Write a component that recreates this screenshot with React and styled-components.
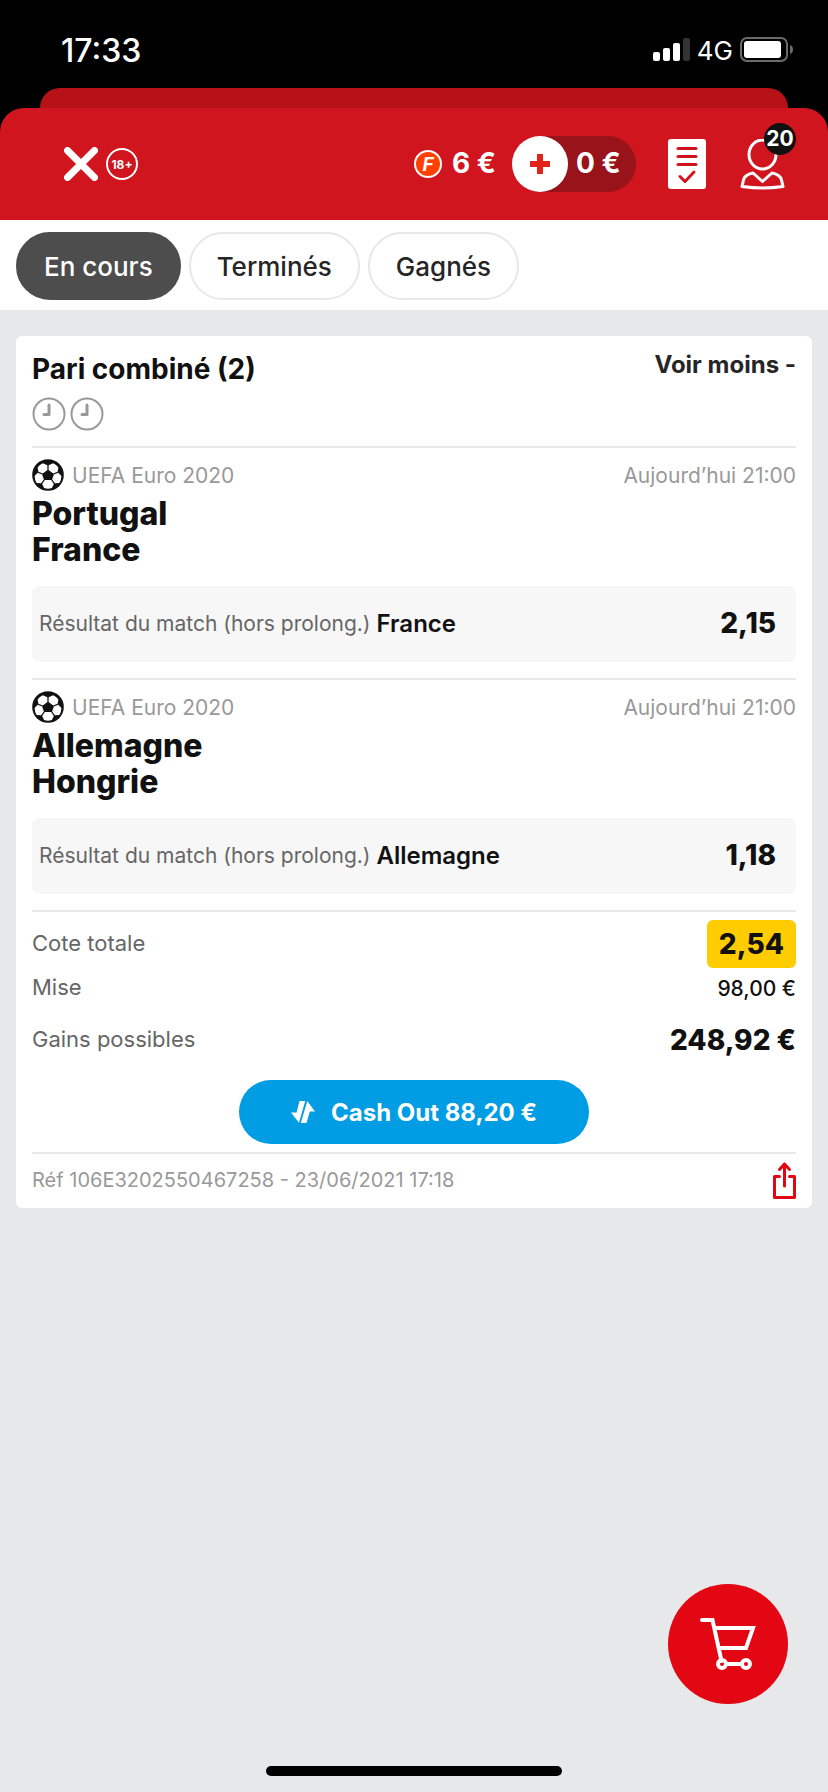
import styled, { createGlobalStyle } from 'styled-components';
import React, { useState } from 'react';

const tabs = ['En cours', 'Terminés', 'Gagnés']

const bets = [
    { id: 1, league: 'UEFA Euro 2020', date: 'Aujourd’hui 21:00', home: 'Portugal', away: 'France', market: 'Résultat du match (hors prolong.)', pick: 'France', odds: '2,15' },
    { id: 2, league: 'UEFA Euro 2020', date: 'Aujourd’hui 21:00', home: 'Allemagne', away: 'Hongrie', market: 'Résultat du match (hors prolong.)', pick: 'Allemagne', odds: '1,18' },
]

const SignalIcon = () => (
    <svg width="37" height="24" viewBox="0 0 37 24" fill="#fff" aria-hidden="true">
        <rect x="0" y="14" width="7" height="9" rx="2" />
        <rect x="10" y="10" width="7" height="13" rx="2" />
        <rect x="20" y="5" width="7" height="18" rx="2" />
        <rect x="30" y="0" width="7" height="23" rx="2" fill="#333" />
    </svg>
)

const BatteryIcon = () => (
    <svg width="54" height="26" viewBox="0 0 54 26" aria-hidden="true">
        <rect x="1" y="1" width="46" height="23" rx="6" fill="none" stroke="#6b6b6b" strokeWidth="2" />
        <rect x="4" y="4" width="37" height="17" rx="3" fill="#fff" />
        <path d="M50 8c4 1.500 4 7.500 0 9z" fill="#6b6b6b" />
    </svg>
)

const CrossIcon = () => (
    <svg width="34" height="34" viewBox="0 0 34 34" aria-hidden="true">
        <path d="M3.500 3.500l27 27M30.500 3.500l-27 27" stroke="#fff" strokeWidth="7" strokeLinecap="round" />
    </svg>
)

const SlipIcon = () => (
    <svg width="38" height="50" viewBox="0 0 38 50" fill="none" aria-hidden="true">
        <rect width="38" height="50" rx="3" fill="#fff" />
        <path d="M10 9.500h18M10 17.500h18M10 25.500h18" stroke="#d0151e" strokeWidth="3" strokeLinecap="round" />
        <path d="M12 37.500l5 5 9-9.500" stroke="#d0151e" strokeWidth="3" strokeLinecap="round" strokeLinejoin="round" />
    </svg>
)

const UserIcon = () => (
    <svg width="46" height="51" viewBox="0 0 46 51" fill="none" stroke="#fff" strokeWidth="3" strokeLinejoin="round" aria-hidden="true">
        <ellipse cx="22.500" cy="15.500" rx="13.500" ry="14.500" />
        <path d="M13 34C7.500 35 4.500 36.500 3.500 41L2 47.500q20.500 3 41 0L41.500 41c-1-4.500-4-6-9.500-7l-9.500 8.500z" />
    </svg>
)

const ClockIcon = () => (
    <svg width="34" height="34" viewBox="0 0 34 34" fill="none" stroke="#999" aria-hidden="true">
        <circle cx="17" cy="17" r="15.500" strokeWidth="2" />
        <path d="M17 8v9.500h-5" strokeWidth="3" strokeLinecap="round" strokeLinejoin="round" />
    </svg>
)

const BallIcon = () => (
    <svg width="32" height="32" viewBox="0 0 32 32" aria-hidden="true">
        <circle cx="16" cy="16" r="15.800" fill="#111" />
        <g fill="#fff">
            <path d="M15.400 6.200v4.800l-4.600 3.400-4.400-1.600-.8-4.300q2-2.900 5.300-4.300z" />
            <path d="M16.600 6.200v4.800l4.600 3.400 4.400-1.600.8-4.300q-2-2.900-5.300-4.300z" />
            <path d="M5.700 13.800l4.500 1.700 1.700 4.900-2.800 3.800-4.500-.2Q2.600 20.800 2.600 17z" />
            <path d="M26.300 13.800l-4.500 1.700-1.700 4.900 2.800 3.800 4.500-.2q2-3.200 2-7z" />
            <path d="M12.900 21h6.200l2.700 3.900-1.900 4.100q-3.900 1.400-7.800 0l-1.900-4.100z" />
        </g>
    </svg>
)

const CashOutIcon = () => (
    <svg width="24" height="22" viewBox="0 0 24 22" fill="#fff" aria-hidden="true">
        <path d="M8.500 0h5.700L8 21.800 0 11.500h5.600z" />
        <path d="M16.300 0L24 10.500h-5.200L15.500 22H9.800z" />
    </svg>
)

const ShareIcon = () => (
    <svg width="23" height="38" viewBox="0 0 23 38" fill="none" stroke="#e30613" strokeWidth="3" strokeLinecap="round" strokeLinejoin="round" aria-hidden="true">
        <path d="M6.500 15.500h-5v21h20v-21h-5" />
        <path d="M11.500 25V3M6.500 8.500L11.500 3l5 5.500" />
    </svg>
)

const CartIcon = () => (
    <svg width="56" height="52" viewBox="0 0 56 52" fill="none" stroke="#fff" strokeWidth="4" strokeLinecap="round" aria-hidden="true">
        <path d="M2 2h10.500l9 41" />
        <path d="M16 10h37l-7 20H20" />
        <path d="M26 46h16" />
        <circle cx="22" cy="46" r="4" />
        <circle cx="46" cy="46" r="4" />
    </svg>
)

export default function App() {
    const [active, setActive] = useState('En cours')
    const [open, setOpen] = useState(true)
    return (
        <>
            <GlobalStyle />
            <Page>
                <StatusBar>
                    <Time>17:33</Time>
                    <StatusIcons>
                        <SignalIcon />
                        <span>4G</span>
                        <BatteryIcon />
                    </StatusIcons>
                </StatusBar>
                <BackSheet />
                <Header>
                    <IconButton aria-label="Fermer"><CrossIcon /></IconButton>
                    <AgeMark>18+</AgeMark>
                    <Spacer />
                    <Freebet>
                        <Coin>F</Coin>
                        <Amount>6 €</Amount>
                    </Freebet>
                    <Balance aria-label="Déposer, solde 0 €">
                        <Plus />
                        <Amount>0 €</Amount>
                    </Balance>
                    <IconButton aria-label="Mes paris"><SlipIcon /></IconButton>
                    <Account aria-label="Mon compte">
                        <UserIcon />
                        <Badge>20</Badge>
                    </Account>
                </Header>
                <Tabs>
                    {tabs.map((tab) => (
                        <Tab key={tab} $active={tab === active} onClick={() => setActive(tab)}>{tab}</Tab>
                    ))}
                </Tabs>
                <Main>
                    <Card>
                        <CardHead>
                            <div>
                                <Title>Pari combiné (2)</Title>
                                <Clocks>
                                    {bets.map((bet) => <ClockIcon key={bet.id} />)}
                                </Clocks>
                            </div>
                            <Toggle onClick={() => setOpen(!open)}>{open ? 'Voir moins -' : 'Voir plus +'}</Toggle>
                        </CardHead>
                        {open && bets.map((bet) => (
                            <Bet key={bet.id}>
                                <BetInfo>
                                    <BallIcon />
                                    <span>{bet.league}</span>
                                    <Spacer />
                                    <span>{bet.date}</span>
                                </BetInfo>
                                <Teams>
                                    {bet.home}<br />{bet.away}
                                </Teams>
                                <Selection>
                                    <Market>{bet.market}</Market>
                                    <Pick>{bet.pick}</Pick>
                                    <Spacer />
                                    <Odds>{bet.odds}</Odds>
                                </Selection>
                            </Bet>
                        ))}
                        <Totals>
                            <Line $height={48}>
                                <dt>Cote totale</dt>
                                <TotalOdds>2,54</TotalOdds>
                            </Line>
                            <Line $height={40}>
                                <dt>Mise</dt>
                                <Stake>98,00 €</Stake>
                            </Line>
                            <Line $height={64}>
                                <dt>Gains possibles</dt>
                                <Odds as="dd">248,92 €</Odds>
                            </Line>
                        </Totals>
                        <CashOut>
                            <CashOutIcon />
                            Cash Out 88,20 €
                        </CashOut>
                        <CardFoot>
                            <span>Réf 106E3202550467258 - 23/06/2021 17:18</span>
                            <IconButton aria-label="Partager"><ShareIcon /></IconButton>
                        </CardFoot>
                    </Card>
                </Main>
            </Page>
            <CartButton aria-label="Panier"><CartIcon /></CartButton>
            <HomeBar />
        </>
    )
}

const GlobalStyle = createGlobalStyle`
    *{
        margin: 0;
        padding: 0;
        box-sizing: border-box;
    }
    body{
        background-color: #e7e8ea;
        font-family: Inter, "Liberation Sans", sans-serif;
        color: #111;
    }
    button{
        font-family: inherit;
        border: none;
        background: none;
        color: inherit;
        cursor: pointer;
    }
    svg{
        display: block;
        flex-shrink: 0;
    }
`
const Page = styled.div`
    min-height: 100vh;
    background: linear-gradient(#000 140px, #e7e8ea 140px);
`
const StatusBar = styled.div`
    height: 88px;
    padding: 12px 34px 0 61px;
    display: flex;
    justify-content: space-between;
    align-items: center;
    color: white;
`
const Time = styled.span`
    font-size: 32px;
    font-weight: 500;
`
const StatusIcons = styled.div`
    display: flex;
    align-items: center;
    gap: 7px;
    font-size: 26px;
`
const BackSheet = styled.div`
    height: 20px;
    margin: 0 40px;
    background-color: #b71218;
    border-radius: 20px 20px 0 0;
`
const Header = styled.header`
    height: 112px;
    padding: 0 42px 0 64px;
    display: flex;
    align-items: center;
    background-color: #d0151e;
    border-radius: 24px 24px 0 0;
    color: white;
`
const IconButton = styled.button`
    display: flex;
`
const Spacer = styled.div`
    flex: 1;
`
const AgeMark = styled.span`
    width: 32px;
    height: 32px;
    margin-left: 8px;
    display: flex;
    justify-content: center;
    align-items: center;
    border: 2px solid white;
    border-radius: 50%;
    font-size: 12px;
    font-weight: 700;
`
const Freebet = styled.div`
    display: flex;
    align-items: center;
    gap: 10px;
`
const Coin = styled.span`
    width: 28px;
    height: 28px;
    display: flex;
    justify-content: center;
    align-items: center;
    border: 2px solid white;
    border-radius: 50%;
    background-color: #ff4000;
    font-size: 19px;
    font-style: italic;
    font-weight: 700;
`
const Amount = styled.span`
    padding-bottom: 2px;
    font-size: 28px;
    font-weight: 700;
`
const Balance = styled.button`
    width: 124px;
    height: 56px;
    margin: 0 32px 0 16px;
    display: flex;
    align-items: center;
    gap: 8px;
    background-color: #98131a;
    border-radius: 28px;
`
const Plus = styled.span`
    width: 56px;
    height: 56px;
    flex-shrink: 0;
    border-radius: 50%;
    background:
        linear-gradient(#e2231a, #e2231a) center / 20px 6px no-repeat,
        linear-gradient(#e2231a, #e2231a) center / 6px 20px no-repeat,
        white;
`
const Account = styled.button`
    position: relative;
    margin-left: 34px;
`
const Badge = styled.span`
    position: absolute;
    top: -16px;
    right: -10px;
    width: 32px;
    height: 32px;
    border-radius: 50%;
    background-color: #111;
    font-size: 21px;
    line-height: 31px;
    font-weight: 700;
    text-align: center;
`
const Tabs = styled.nav`
    height: 90px;
    padding: 12px 16px;
    display: flex;
    gap: 8px;
    background-color: white;
`
const Tab = styled.button`
    height: 68px;
    padding: 0 26px;
    border: 2px solid ${(props) => (props.$active ? '#4d4d4d' : '#e8e8e8')};
    border-radius: 34px;
    background-color: ${(props) => (props.$active ? '#4d4d4d' : 'white')};
    color: ${(props) => (props.$active ? 'white' : '#262626')};
    font-size: 26px;
    font-weight: 500;
`
const Main = styled.main`
    padding: 26px 16px 200px;
`
const Card = styled.section`
    padding: 0 16px;
    background-color: white;
    border-radius: 6px;
`
const CardHead = styled.div`
    height: 110px;
    padding-top: 16px;
    display: flex;
    justify-content: space-between;
    align-items: flex-start;
`
const Title = styled.h1`
    font-size: 28px;
    line-height: 34px;
    font-weight: 700;
`
const Clocks = styled.div`
    margin-top: 11px;
    display: flex;
    gap: 4px;
`
const Toggle = styled.button`
    font-size: 24px;
    line-height: 26px;
    font-weight: 700;
    color: #262626;
`
const Bet = styled.article`
    padding: 10px 0 16px;
    border-top: 2px solid #e8e8e8;
`
const BetInfo = styled.div`
    height: 34px;
    display: flex;
    align-items: center;
    gap: 8px;
    font-size: 21px;
    color: #999;
`
const Teams = styled.h2`
    margin: 4px 0 18px;
    font-size: 32px;
    line-height: 36px;
    font-weight: 800;
`
const Selection = styled.div`
    height: 76px;
    padding: 0 20px 2px 7px;
    display: flex;
    align-items: center;
    background-color: #f7f7f7;
    border-radius: 8px;
`
const Market = styled.span`
    margin-right: 6px;
    font-size: 21px;
    color: #666;
`
const Pick = styled.span`
    font-size: 24px;
    font-weight: 600;
`
const Odds = styled.strong`
    font-size: 28px;
    font-weight: 800;
`
const Totals = styled.dl`
    padding-top: 8px;
    border-top: 2px solid #e8e8e8;
`
const Line = styled.div`
    height: ${(props) => props.$height}px;
    display: flex;
    justify-content: space-between;
    align-items: center;
    dt{
        padding-bottom: 2px;
        font-size: 22px;
        color: #666;
    }
`
const TotalOdds = styled.dd`
    padding: 0 12px;
    background-color: #ffcc00;
    border-radius: 6px;
    font-size: 28px;
    line-height: 48px;
    font-weight: 800;
`
const Stake = styled.dd`
    font-size: 21px;
    font-weight: 500;
`
const CashOut = styled.button`
    height: 64px;
    margin: 8px auto;
    padding: 0 52px;
    display: flex;
    align-items: center;
    gap: 16px;
    background-color: #009de4;
    border-radius: 32px;
    color: white;
    font-size: 24px;
    font-weight: 700;
`
const CardFoot = styled.footer`
    height: 56px;
    padding-bottom: 2px;
    display: flex;
    justify-content: space-between;
    align-items: center;
    border-top: 2px solid #e8e8e8;
    font-size: 20px;
    color: #999;
`
const CartButton = styled.button`
    position: fixed;
    right: 40px;
    bottom: 88px;
    width: 120px;
    height: 120px;
    display: flex;
    justify-content: center;
    align-items: center;
    border-radius: 50%;
    background-color: #e30613;
`
const HomeBar = styled.div`
    position: fixed;
    bottom: 16px;
    left: 50%;
    width: 296px;
    height: 10px;
    margin-left: -148px;
    border-radius: 5px;
    background-color: black;
`
